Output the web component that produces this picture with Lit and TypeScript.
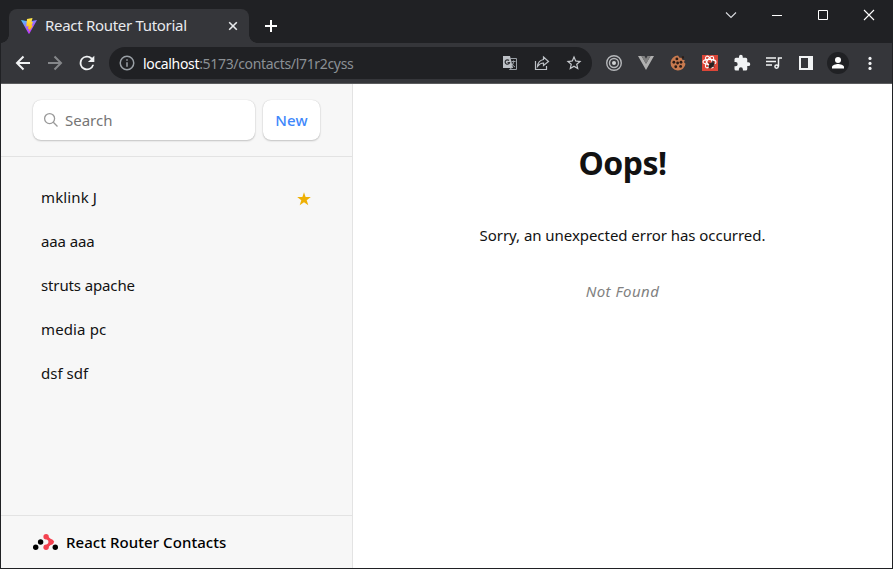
import { LitElement, html, css, svg } from "lit";
import { customElement } from "lit/decorators.js";

const contacts = [
  { name: "mklink J", favorite: true, cls: "n0" },
  { name: "aaa aaa", favorite: false, cls: "n1" },
  { name: "struts apache", favorite: false, cls: "n2" },
  { name: "media pc", favorite: false, cls: "n3" },
  { name: "dsf sdf", favorite: false, cls: "n4" },
];

const holes = [[10.5, 6.5], [6.5, 11], [16, 11], [11.5, 12], [9, 17], [15.5, 16.5]];

@customElement("browser-chrome")
class BrowserChrome extends LitElement {
  static styles = css`
    :host { display: block; flex: none; font-family: "Noto Sans", "Open Sans", sans-serif; color: #e8eaed; }
    svg { display: block; flex: none; }
    .strip { height: 43px; background: #202124; display: flex; padding-left: 8px; }
    .tab { width: 240px; height: 34px; margin-top: 9px; background: #35363a; border-radius: 8px 8px 0 0; display: flex; align-items: center; padding: 0 10px 0 12px; box-sizing: border-box; position: relative; }
    .tab::before, .tab::after { content: ""; position: absolute; bottom: 0; width: 8px; height: 8px; }
    .tab::before { left: -8px; background: radial-gradient(circle at 0 0, #202124 7.5px, #35363a 8px); }
    .tab::after { right: -8px; background: radial-gradient(circle at 100% 0, #202124 7.5px, #35363a 8px); }
    .title { font-size: 15px; letter-spacing: -0.3px; margin-left: 8px; flex: 1; white-space: nowrap; line-height: 20px; padding-bottom: 2px; }
    .plus { margin: 19px 0 0 15px; }
    .controls { margin-left: auto; display: flex; gap: 30px; margin-top: 7px; padding-right: 15px; }
    .bar { height: 40px; background: #35363a; display: flex; align-items: center; box-sizing: border-box; padding-left: 12px; }
    .nav { display: flex; gap: 12px; align-items: center; }
    .nav .reload { margin: 0 0 0 -1px; }
    .address { width: 483px; height: 32px; border-radius: 16px; background: #202124; margin-left: 11px; display: flex; align-items: center; padding: 0 9px 0 9px; box-sizing: border-box; }
    .url { font-size: 14px; color: #8b9095; margin-left: 7px; flex: 1; white-space: nowrap; letter-spacing: -0.33px; }
    .url b { font-weight: 400; color: #fff; }
    .actions { display: flex; gap: 14px; }
    .ext { display: flex; gap: 14px; margin-left: 13px; align-items: center; }
    .ext .avatar { margin: 0 -2px; }
    .rule { height: 1px; background: #5b5c5e; }
  `;

  render() {
    return html`
      <div class="strip">
        <div class="tab">
          <svg width="16" height="16" viewBox="0 0 32 32">
            <defs>
              <linearGradient id="v" x1="0" y1="0" x2=".6" y2="1"><stop offset="0" stop-color="#41d1ff" /><stop offset=".6" stop-color="#a45cff" /><stop offset="1" stop-color="#bd34fe" /></linearGradient>
              <linearGradient id="b" x1="0" y1="0" x2="0" y2="1"><stop offset="0" stop-color="#ffea50" /><stop offset="1" stop-color="#ffa800" /></linearGradient>
            </defs>
            <path fill="url(#v)" d="M0 4 16 7 32 4 17 31Q16 32 15 31Z" />
            <path fill="url(#b)" d="M23 0 12 2 10.500 17 15 16 14 22 17 22 15.500 28 24 15.500 21 15 24 8 21 8Z" />
          </svg>
          <span class="title">React Router Tutorial</span>
          <svg width="12" height="12" viewBox="0 0 12 12" stroke="#e8eaed" stroke-width="1.600"><path d="m2.200 2.200 7.600 7.600m0-7.600-7.600 7.600" /></svg>
        </div>
        <svg class="plus" width="14" height="14" viewBox="0 0 14 14" stroke="#fff" stroke-width="2"><path d="M7 1v12M1 7h12" /></svg>
        <div class="controls">
          <svg width="16" height="16" viewBox="0 0 16 16" fill="none" stroke="#dadce0" stroke-width="1.1"><path d="m3 5.500 5 5 5-5" /></svg>
          <svg width="16" height="16" viewBox="0 0 16 16" fill="none" stroke="#fff"><path d="M3 8.500h10" /></svg>
          <svg width="16" height="16" viewBox="0 0 16 16" fill="none" stroke="#fff"><path d="M3.500 3.500h9v9h-9z" /></svg>
          <svg width="16" height="16" viewBox="0 0 16 16" fill="none" stroke="#fff" stroke-width="1.1"><path d="m3 3 10 10m0-10L3 13" /></svg>
        </div>
      </div>
      <div class="bar">
        <div class="nav">
          <svg width="20" height="20" viewBox="0 0 20 20" fill="none" stroke="#f1f3f4" stroke-width="2"><path d="M17 10H4.500m6-6.500L4 10l6.500 6.500" /></svg>
          <svg width="20" height="20" viewBox="0 0 20 20" fill="none" stroke="#85878a" stroke-width="2"><path d="M3 10h12.500m-6-6.500L16 10l-6.500 6.500" /></svg>
          <svg class="reload" width="22" height="22" viewBox="0 0 24 24" fill="#f1f3f4"><path d="M17.650 6.350A8 8 0 1 0 19.730 14h-2.080A6 6 0 1 1 12 6c1.660 0 3.140.69 4.220 1.780L13 11h7V4z" /></svg>
        </div>
        <div class="address">
          <svg width="18" height="18" viewBox="0 0 24 24" fill="#9aa0a6"><path d="M11 17h2v-6h-2zm0-8h2V7h-2zm1-7a10 10 0 1 0 0 20 10 10 0 0 0 0-20m0 18a8 8 0 1 1 0-16 8 8 0 0 1 0 16" /></svg>
          <span class="url"><b>localhost</b>:5173/contacts/l71r2cyss</span>
          <div class="actions">
            <svg width="18" height="18" viewBox="0 0 18 18"><path fill="#bdc1c6" d="M2 2h7l3 12H2z" /><path fill="none" stroke="#9aa0a6" d="M9 4.500h6.500v11h-7l2.500-2" /><path fill="none" stroke="#303134" stroke-width="1.200" d="M8 6.500A2.200 2.200 0 1 0 8.500 8.700H6.500" /><path fill="none" stroke="#9aa0a6" d="M10.500 7.500h4m-2-1v1c0 2-1 3.500-2 4.500m0-3c1 2 2 3 3.500 4" /></svg>
            <svg width="18" height="18" viewBox="0 0 18 18" fill="none" stroke="#bdc1c6" stroke-width="1.200"><path d="M2.500 7v8.500h11V12M10.500 3l5 4.500-5 4V9Q7 9 4.500 12.500 5 6.500 10.500 5.500z" /></svg>
            <svg width="18" height="18" viewBox="0 0 24 24" fill="#c8cbcf"><path d="m22 9.240-7.190-.62L12 2 9.190 8.630 2 9.240l5.460 4.730L5.820 21 12 17.270 18.180 21l-1.630-7.030zM12 15.400l-3.760 2.270 1-4.280-3.320-2.880 4.380-.38L12 6.100l1.710 4.040 4.380.38-3.320 2.880 1 4.280z" /></svg>
          </div>
        </div>
        <div class="ext">
          <svg width="18" height="18" viewBox="0 0 18 18" fill="none" stroke="#b5b7ba" stroke-width="1.400"><circle cx="9" cy="9" r="7.300" /><circle cx="9" cy="9" r="4.500" /><circle cx="9" cy="9" r="2" fill="#d0d2d4" stroke="none" /></svg>
          <svg width="18" height="18" viewBox="0 0 18 18"><path fill="#b0b0b0" d="M1 2h3.500L9 9.800 13.500 2H17L9 16z" /><path fill="#808080" d="M4.500 2h3L9 4.700 10.500 2h3L9 9.800z" /></svg>
          <svg width="18" height="18" viewBox="0 0 24 24"><path fill="#c87a4f" d="M12 2a10 10 0 1 0 10 11l-2-2 1-3-3 0-1-3-3 0z" />${holes.map(([x, y]) => svg`<circle cx=${x} cy=${y} r="1.900" fill="#2b1c16" />`)}<path fill="#2b1c16" d="M17 3h3v3h-3z" /></svg>
          <svg width="18" height="18" viewBox="0 0 18 18"><path fill="#dc4638" d="M1 1h16v16H1z" /><g fill="none" stroke="#fff" stroke-width="1.100"><ellipse cx="8.500" cy="8" rx="6.500" ry="2.600" /><ellipse cx="8.500" cy="8" rx="6.500" ry="2.600" transform="rotate(60 8.500 8)" /><ellipse cx="8.500" cy="8" rx="6.500" ry="2.600" transform="rotate(120 8.500 8)" /></g><ellipse cx="10.500" cy="11" rx="3.500" ry="2.200" transform="rotate(-45 10.500 11)" fill="#282020" /><path stroke="#282020" d="m7.500 8.500 6 4.500M11 7l2 1M8 13l1 1.500" /></svg>
          <svg width="18" height="18" viewBox="0 0 24 24" fill="#f1f3f4"><path d="M20.500 11H19V7a2 2 0 0 0-2-2h-4V3.500a2.500 2.500 0 0 0-5 0V5H4a2 2 0 0 0-2 2v3.800h1.500a2.700 2.700 0 0 1 0 5.400H2V20a2 2 0 0 0 2 2h3.800v-1.500a2.700 2.700 0 0 1 5.400 0V22H17a2 2 0 0 0 2-2v-4h1.500a2.500 2.500 0 0 0 0-5" /></svg>
          <svg width="18" height="18" viewBox="0 0 18 18" fill="none" stroke="#f1f3f4" stroke-width="1.500"><path d="M1 4h10M1 7.500h10M1 11h6M17 4h-3.500v8.500" /><circle cx="11.600" cy="12.600" r="1.700" /></svg>
          <svg width="18" height="18" viewBox="0 0 18 18"><path fill="#f1f3f4" d="M2 2h14v14H2z" /><path fill="#35363a" d="M4 4h7v10H4z" /></svg>
          <svg class="avatar" width="22" height="22" viewBox="0 0 22 22"><circle cx="11" cy="11" r="11" fill="#202124" /><g fill="#fff"><circle cx="11" cy="8" r="3" /><path d="M5 16.500v-1.500c0-2 4-3 6-3s6 1 6 3v1.500z" /></g></svg>
          <svg width="18" height="18" viewBox="0 0 18 18" fill="#f1f3f4"><circle cx="9" cy="4.400" r="1.600" /><circle cx="9" cy="9.400" r="1.600" /><circle cx="9" cy="14.400" r="1.600" /></svg>
        </div>
      </div>
      <div class="rule"></div>
    `;
  }
}

@customElement("contact-sidebar")
class ContactSidebar extends LitElement {
  static styles = css`
    :host { display: flex; flex-direction: column; width: 352px; box-sizing: border-box; flex: none; background: #f7f7f7; border-right: 1px solid #e3e3e3; font: 15px/24px "Noto Sans", "Open Sans", sans-serif; color: #121212; white-space: nowrap; }
    .top { display: flex; gap: 8px; padding: 16px 32px; border-bottom: 1px solid #e3e3e3; height: 40px; }
    .search, .new { background: #fff; border-radius: 8px; box-shadow: 0 0 1px rgba(0, 0, 0, .2), 0 1px 2px rgba(0, 0, 0, .2); box-sizing: border-box; height: 40px; display: flex; align-items: center; }
    .search { width: 222px; padding-left: 10px; gap: 6px; color: #757575; }
    .new { width: 57px; justify-content: center; color: #3f88fb; font-weight: 500; letter-spacing: 0.2px; }
    .list { flex: 1; padding: 18px 32px 0; }
    .item { height: 44px; padding: 0 8px; display: flex; align-items: center; justify-content: space-between; }
    .n0, .n3 { letter-spacing: 0.13px; }
    .n1, .n2 { letter-spacing: -0.13px; }
    .foot { border-top: 1px solid #e3e3e3; height: 52px; padding-left: 32px; display: flex; align-items: center; gap: 8px; font-weight: 500; color: #000; }
    .brand { letter-spacing: 0.06px; }
    .star { margin: 3px 1px 0 0; }
  `;

  render() {
    return html`
      <div class="top">
        <div class="search">
          <svg width="16" height="16" viewBox="0 0 16 16" fill="none" stroke="#999" stroke-width="1.300"><circle cx="6.600" cy="6.600" r="5" /><path d="m10.300 10.300 4.200 4.200" /></svg>
          <span class="ph">Search</span>
        </div>
        <div class="new"><span>New</span></div>
      </div>
      <div class="list">
        ${contacts.map((c) => html`<div class="item"><span class=${c.cls}>${c.name}</span>${c.favorite ? html`<svg class="star" width="14" height="14" viewBox="0 0 14 14" fill="#eeb004"><path d="m7 .3 1.600 4.800h5.200L9.700 8.200l1.600 5.100L7 10.200l-4.300 3.100 1.600-5.100L.2 5.100h5.200z" /></svg>` : null}</div>`)}
      </div>
      <div class="foot">
        <svg width="25" height="16" viewBox="0 0 25 16"><path d="M13 2.800 19 7.800 13 13.200" fill="none" stroke="#f44250" stroke-width="3" /><g fill="#f44250"><circle cx="13.100" cy="2.700" r="2.700" /><circle cx="18" cy="8" r="2.700" /><circle cx="13.100" cy="13.300" r="2.700" /></g><circle cx="7.600" cy="8" r="2.700" /><circle cx="2.700" cy="13.300" r="2.700" /><circle cx="22.300" cy="13.300" r="2.700" /></svg>
        <span class="brand">React Router Contacts</span>
      </div>
    `;
  }
}

@customElement("app-root")
class AppRoot extends LitElement {
  static styles = css`
    :host { display: flex; flex-direction: column; height: 569px; width: 893px; box-sizing: border-box; border: solid #202124; border-width: 0 1px 1px; overflow: hidden; background: #fff; }
    .body { flex: 1; display: flex; min-height: 0; }
    .error { flex: 1; display: flex; flex-direction: column; align-items: center; font: 15px/24px "Noto Sans", "Open Sans", sans-serif; color: #121212; padding-top: 57px; white-space: nowrap; }
    h1 { font-size: 32px; line-height: 44px; margin: 0; font-weight: 700; letter-spacing: -0.5px; }
    p { margin: 38px 0 0; letter-spacing: -0.05px; }
    .status { margin-top: 32px; color: #818181; font-style: italic; letter-spacing: 0.45px; }
  `;

  render() {
    return html`
      <browser-chrome></browser-chrome>
      <div class="body">
        <contact-sidebar></contact-sidebar>
        <main class="error">
          <h1>Oops!</h1>
          <p class="message">Sorry, an unexpected error has occurred.</p>
          <p class="status">Not Found</p>
        </main>
      </div>
    `;
  }
}
